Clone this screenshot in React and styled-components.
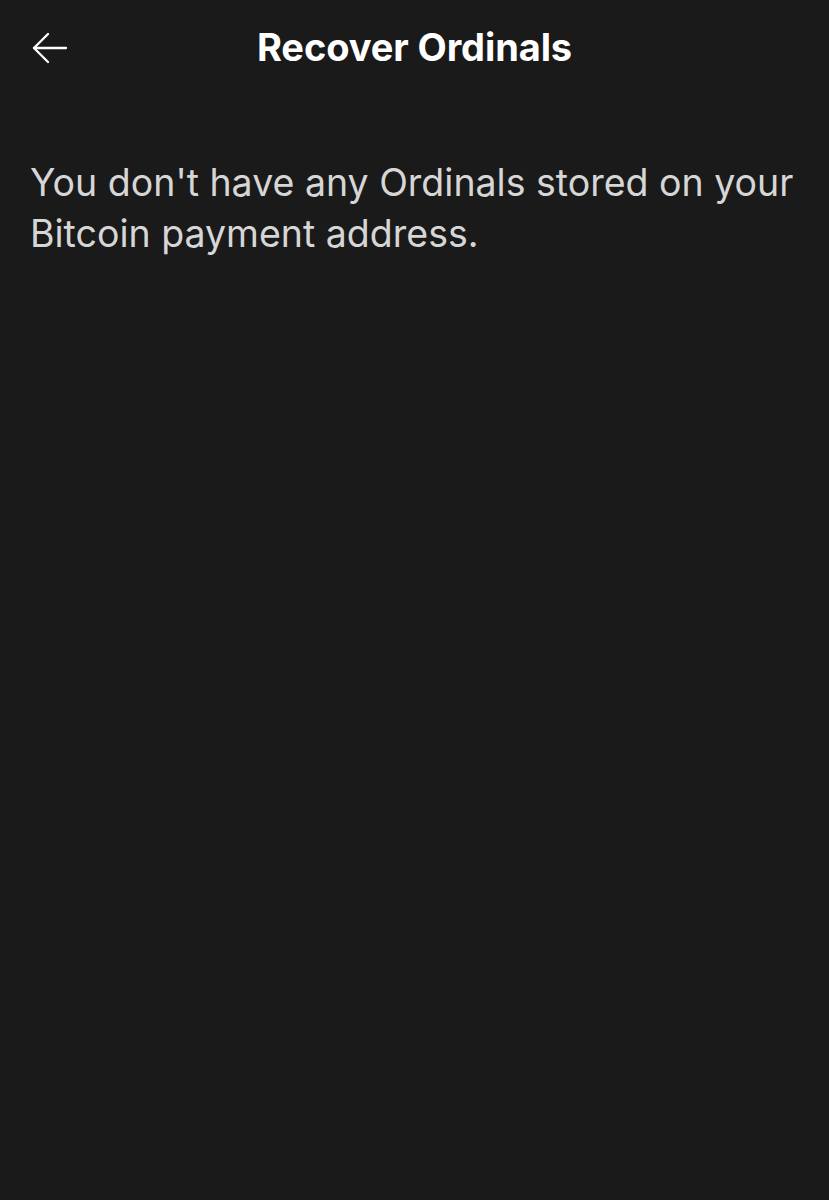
import * as React from "react"
import styled, { createGlobalStyle } from "styled-components"

const GlobalStyle = createGlobalStyle`
    html, body {
        margin: 0;
        padding: 0;
        background: #1a1a1a;
    }
    body {
        font-family: Inter, "Noto Sans", sans-serif;
        -webkit-font-smoothing: antialiased;
    }
`

const Screen = styled.div`
    min-height: 1200px;
    background: #1a1a1a;
    color: #ffffff;
    display: flex;
    flex-direction: column;
`

const Header = styled.header`
    position: relative;
    height: 94px;
    display: flex;
    align-items: center;
    justify-content: center;
`

const BackButton = styled.button`
    position: absolute;
    left: 30px;
    top: 28px;
    width: 40px;
    height: 40px;
    padding: 0;
    border: none;
    background: none;
    color: #ffffff;
    display: flex;
    align-items: center;
    justify-content: center;
    cursor: pointer;
`

const Title = styled.h1`
    margin: 0;
    font-size: 38px;
    font-weight: 700;
    letter-spacing: -0.1px;
    color: #ffffff;
`

const Content = styled.main`
    padding: 63px 30px 0;
`

const Message = styled.p`
    margin: 0;
    font-size: 37.5px;
    line-height: 51px;
    font-weight: 400;
    color: #d6d6d6;
`

const ArrowLeft = () => (
    <svg width="38" height="34" viewBox="0 0 38 34" fill="none" stroke="currentColor" strokeWidth="2.3" strokeLinecap="round" strokeLinejoin="round">
        <path d="M35 17H3" />
        <path d="M17 3L3 17L17 31" />
    </svg>
)

const App = () => {
    return (
        <>
            <GlobalStyle />
            <Screen>
                <Header>
                    <BackButton aria-label="Back">
                        <ArrowLeft />
                    </BackButton>
                    <Title>Recover Ordinals</Title>
                </Header>
                <Content>
                    <Message>You don't have any Ordinals stored on your Bitcoin payment address.</Message>
                </Content>
            </Screen>
        </>
    )
}

export default App
